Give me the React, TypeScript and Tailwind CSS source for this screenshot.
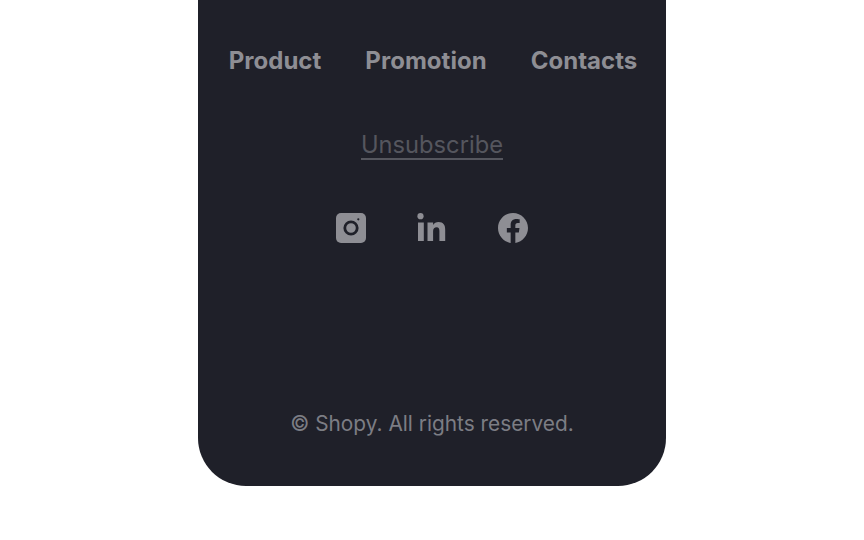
export default function App() {
  return (
    <div className="h-[540px] w-[864px] bg-white flex justify-center" style={{ fontFamily: "Inter, sans-serif" }}>
      <div className="w-[468px] h-[486px] bg-[#1f2029] rounded-b-[48px] flex flex-col items-center">
        <nav className="mt-[46px] ml-[2px] flex gap-[44px] text-[24px] leading-[30px] font-bold tracking-[0.03px] text-[#8e8e94]">
          <span>Product</span>
          <span>Promotion</span>
          <span>Contacts</span>
        </nav>
        <a className="mt-[56px] text-[23.7px] leading-[26px] text-[#55565e] border-b-2 border-[#55565e]">Unsubscribe</a>
        <div className="mt-[53px] flex gap-[51px] items-start text-[#8e8e94]">
          <svg width="30" height="30" viewBox="0 0 30 30" fill="none">
            <rect width="30" height="30" rx="5" fill="currentColor" />
            <circle cx="15" cy="15" r="6.200" stroke="#1f2029" strokeWidth="2.800" />
            <circle cx="22.300" cy="6.300" r="1.100" fill="#1f2029" />
          </svg>
          <svg width="30" height="30" viewBox="0 0 30 30" fill="currentColor">
            <circle cx="3.500" cy="3.200" r="3.100" />
            <rect x="1" y="9.500" width="5.800" height="18.500" />
            <path d="M10.500 9.500h5.600v2.600c1-1.800 3-3 5.400-3 5 0 6.700 3.100 6.700 7.700v11.200h-5.800v-10c0-2.300-.7-3.700-2.700-3.700-2.300 0-3.600 1.500-3.600 3.700v10h-5.600z" />
          </svg>
          <svg width="30" height="30" viewBox="0 0 24 24" fill="currentColor">
            <path d="M24 12.070C24 5.400 18.630 0 12 0S0 5.400 0 12.070c0 6.030 4.390 11.030 10.130 11.930v-8.440H7.080v-3.490h3.050V9.410c0-3.020 1.790-4.690 4.530-4.690 1.310 0 2.680.24 2.680.24v2.970h-1.510c-1.490 0-1.960.93-1.960 1.880v2.260h3.330l-.53 3.490h-2.800V24C19.610 23.100 24 18.100 24 12.070z" />
          </svg>
        </div>
        <p className="mt-[168px] text-[20.85px] leading-[26px] text-[#7c7d84]">© Shopy. All rights reserved.</p>
      </div>
    </div>
  );
}
